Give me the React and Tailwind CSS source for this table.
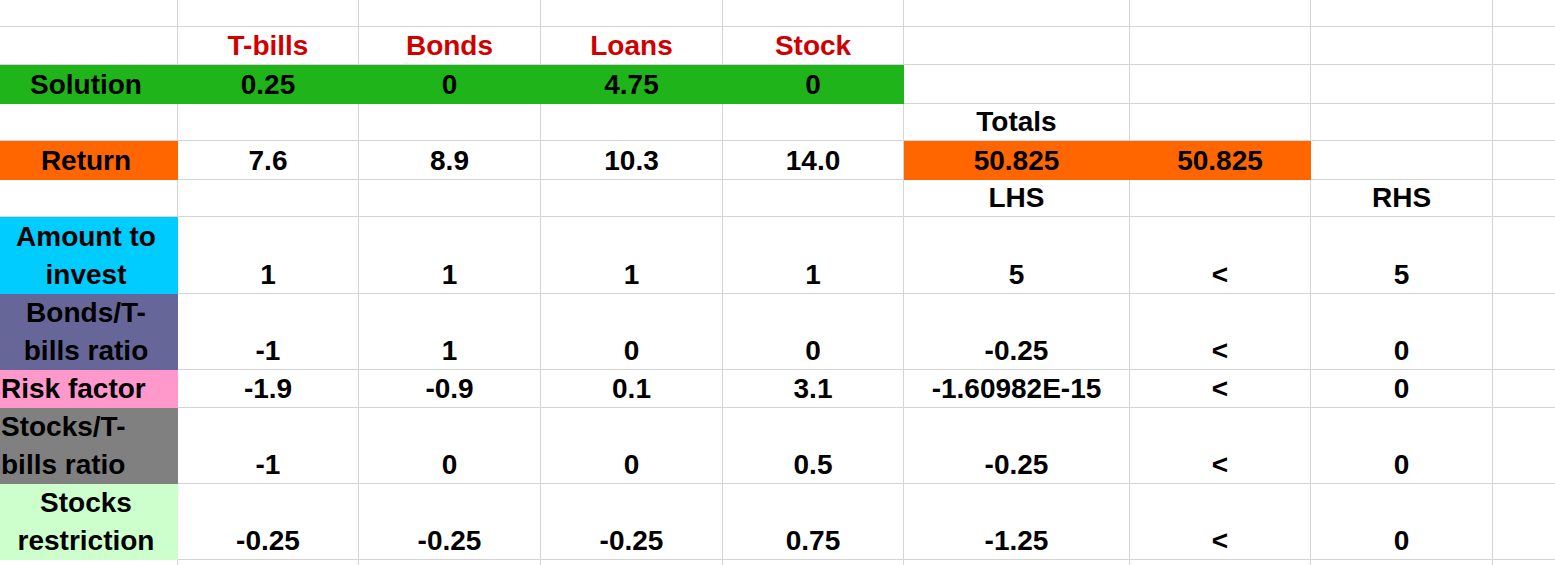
import React from 'react';

// Spreadsheet: LP model for the investment mix
const GRID = 'border-[#d4d4d4]';

const GREEN = 'bg-[#1fb41a] border-[#1fb41a]';
const ORANGE = 'bg-[#ff6600] border-[#ff6600]';
const BLUE = 'bg-[#00ccff] border-[#00ccff]';
const PURPLE = 'bg-[#666699] border-[#666699]';
const PINK = 'bg-[#ff99cc] border-[#ff99cc]';
const GRAY = 'bg-[#808080] border-[#808080]';
const MINT = 'bg-[#ccffcc] border-[#ccffcc]';

const blank = ['', '', '', '', '', '', '', '', ''];

const rows = [
  blank,
  ['', { t: 'T-bills', red: true }, { t: 'Bonds', red: true }, { t: 'Loans', red: true }, { t: 'Stock', red: true }, '', '', '', ''],
  [
    { t: 'Solution', bg: GREEN },
    { t: '0.25', bg: GREEN },
    { t: '0', bg: GREEN },
    { t: '4.75', bg: GREEN },
    { t: '0', bg: GREEN },
    '', '', '', '',
  ],
  ['', '', '', '', '', 'Totals', '', '', ''],
  [
    { t: 'Return', bg: ORANGE },
    '7.6', '8.9', '10.3', '14.0',
    { t: '50.825', bg: ORANGE },
    { t: '50.825', bg: ORANGE },
    '', '',
  ],
  ['', '', '', '', '', 'LHS', '', 'RHS', ''],
  [{ t: ['Amount to', 'invest'], bg: BLUE }, '1', '1', '1', '1', '5', '<', '5', ''],
  [{ t: ['Bonds/T-', 'bills ratio'], bg: PURPLE }, '-1', '1', '0', '0', '-0.25', '<', '0', ''],
  [{ t: 'Risk factor', bg: PINK, left: true }, '-1.9', '-0.9', '0.1', '3.1', '-1.60982E-15', '<', '0', ''],
  [{ t: ['Stocks/T-', 'bills ratio'], bg: GRAY, left: true }, '-1', '0', '0', '0.5', '-0.25', '<', '0', ''],
  [{ t: ['Stocks', 'restriction'], bg: MINT }, '-0.25', '-0.25', '-0.25', '0.75', '-1.25', '<', '0', ''],
  blank,
];

function Cell({ cell, col, last }) {
  const c = typeof cell === 'string' ? { t: cell } : cell;
  const lines = Array.isArray(c.t) ? c.t : [c.t];
  let align = 'items-center';
  if (c.left) align = 'items-start pl-[1px]';
  else if (col === 0) align = 'items-center pr-[5px]';
  return (
    <div
      className={`flex flex-col justify-end gap-[2px] whitespace-nowrap leading-[36px] ${align} ${
        col === 8 ? 'border-r-0' : 'border-r'
      } ${last ? 'border-b-0' : 'border-b'} ${c.bg ? c.bg : GRID} ${
        c.red ? 'text-[#d10000]' : 'text-black'
      }`}
    >
      {lines.map((line, i) => (
        <span key={i}>{line}</span>
      ))}
    </div>
  );
}

export default function App() {
  return (
    <div className="w-[1555px] h-[565px] overflow-hidden bg-white font-['Liberation_Sans',Arial,sans-serif] text-[28px] font-bold">
      <div className="grid grid-cols-[178px_181px_182px_182px_181px_226px_181px_182px_62px] grid-rows-[27px_38px_39px_37px_39px_37px_77px_76px_38px_76px_76px_5px]">
        {rows.map((row, ri) =>
          row.map((cell, ci) => (
            <Cell key={`${ri}-${ci}`} cell={cell} col={ci} last={ri === rows.length - 1} />
          ))
        )}
      </div>
    </div>
  );
}
